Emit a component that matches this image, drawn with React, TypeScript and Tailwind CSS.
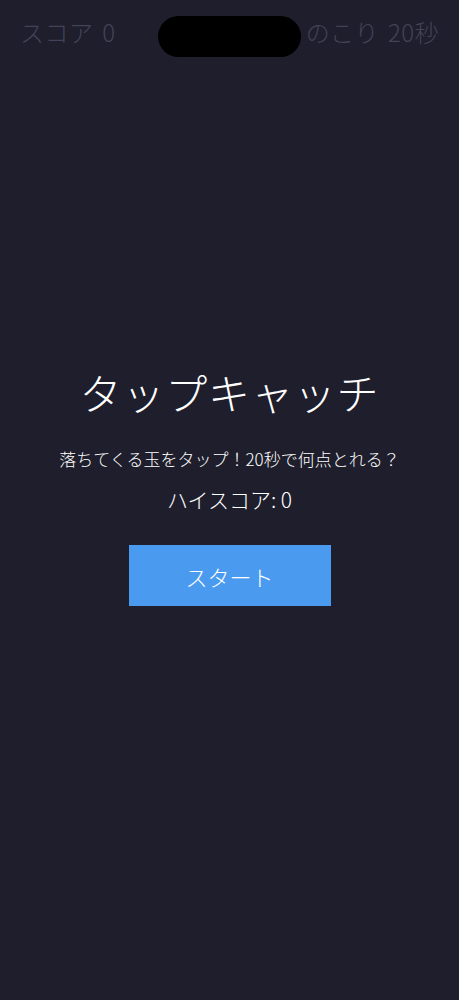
import React from "react";

export default function App() {
  const score = 0;
  const timeLeft = 20;
  const highScore = 0;

  return (
    <div
      className="relative w-full h-[1000px] bg-[#1e1e2c] text-white overflow-hidden font-light"
      style={{ fontFamily: '"Noto Sans CJK JP", "Noto Sans", sans-serif' }}
    >
      {/* status bar notch */}
      <div className="absolute left-[158px] top-[16px] w-[143px] h-[41px] rounded-full bg-black" />

      {/* HUD */}
      <div className="flex justify-between items-center px-[20px] pt-[14px] h-[36px] box-content text-[24px] leading-none tracking-[0.02em] [word-spacing:3px] text-[#424357]">
        <span>スコア {score}</span>
        <span>のこり {timeLeft}秒</span>
      </div>

      {/* start screen */}
      <div className="flex flex-col items-center pt-[321px]">
        <h1 className="text-[42px] leading-none font-light tracking-[0.02em]">タップキャッチ</h1>
        <p className="mt-[37px] text-[17px] leading-none">落ちてくる玉をタップ！20秒で何点とれる？</p>
        <p className="mt-[22px] text-[21px] leading-none">ハイスコア: {highScore}</p>
        <button className="mt-[35px] w-[202px] h-[61px] bg-[#4a9bf0] text-[22px] leading-none text-white font-light">
          スタート
        </button>
      </div>
    </div>
  );
}
